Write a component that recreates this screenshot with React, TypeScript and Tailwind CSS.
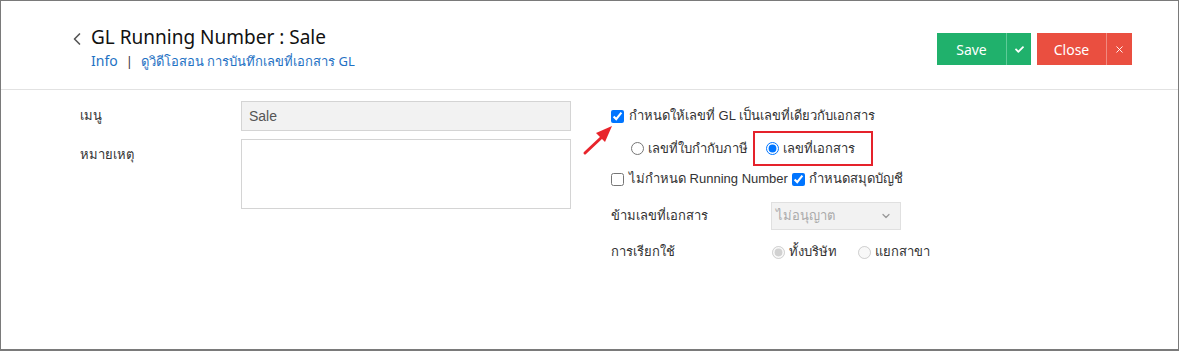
import { ChevronLeft, ChevronDown, X } from "lucide-react";
import { FaCheck } from "react-icons/fa";

const font = { fontFamily: '"Noto Sans", "Open Sans", sans-serif' };
const bodyFont = { fontFamily: '"Liberation Sans", "Noto Sans", sans-serif' };

function Check({ checked }: { checked?: boolean }) {
  return (
    <input
      type="checkbox"
      defaultChecked={checked}
      className="h-[13px] w-[13px] shrink-0 accent-[#0075ff]"
    />
  );
}

function Radio({ checked, disabled, name }: { checked?: boolean; disabled?: boolean; name: string }) {
  return (
    <input
      type="radio"
      name={name}
      defaultChecked={checked}
      disabled={disabled}
      className="h-[13px] w-[13px] shrink-0 accent-[#0075ff]"
    />
  );
}

export default function App() {
  return (
    <div
      className="relative h-[351px] w-[1179px] overflow-hidden border border-b-2 border-[#7a7a7a] bg-white text-[#333]"
      style={font}
    >
      {/* Header */}
      <div className="flex h-[89px] items-start justify-between border-b border-[#e2e2e2] pl-[66px] pr-[46px]">
        <div className="flex items-start pt-[23px]">
          <ChevronLeft className="mt-[5px] h-[20px] w-[20px] text-[#555]" strokeWidth={2} />
          <div className="ml-[4px]">
            <div className="text-[19px] leading-[26px] text-[#111]">GL Running Number : Sale</div>
            <div className="mt-[2px] flex items-center text-[13px] leading-[18px] text-[#1f72c4]">
              <span className="text-[14px]">Info</span>
              <span className="mx-[8px] text-[#333]">|</span>
              <span>ดูวิดีโอสอน การบันทึกเลขที่เอกสาร GL</span>
            </div>
          </div>
        </div>

        <div className="flex gap-[6px] pt-[32px]">
          <div className="flex h-[32px] bg-[#20b16c] text-white">
            <button className="w-[69px] text-[14px]">Save</button>
            <div className="w-px bg-[#5fcb98]" />
            <button className="flex w-[24px] items-center justify-center">
              <FaCheck className="h-[9px] w-[9px]" />
            </button>
          </div>
          <div className="flex h-[32px] bg-[#ea4f40] text-white">
            <button className="w-[69px] text-[14px]">Close</button>
            <div className="w-px bg-[#f08a80]" />
            <button className="flex w-[25px] items-center justify-center">
              <X className="h-[11px] w-[11px]" strokeWidth={2} />
            </button>
          </div>
        </div>
      </div>

      {/* Body */}
      <div className="flex pl-[79px] pt-[11px] text-[13px]" style={bodyFont}>
        <div className="w-[491px]">
          <div className="flex h-[30px] items-center">
            <div className="w-[161px]">เมนู</div>
            <div className="flex h-[30px] w-[330px] items-center border border-[#d4d4d4] bg-[#f2f2f2] px-[7px] text-[14px] text-[#555]">
              Sale
            </div>
          </div>
          <div className="mt-[8px] flex items-start">
            <div className="w-[161px] pt-[6px]">หมายเหตุ</div>
            <div className="h-[70px] w-[330px] border border-[#d4d4d4] bg-white" />
          </div>
        </div>

        <div className="ml-[40px] pt-[3px]">
          <label className="flex h-[24px] items-center gap-[5px]">
            <Check checked />
            <span>กำหนดให้เลขที่ GL เป็นเลขที่เดียวกับเอกสาร</span>
          </label>

          <div className="mt-[3px] flex h-[35px] items-center pl-[20px]">
            <label className="flex w-[122px] items-center gap-[4px] whitespace-nowrap">
              <Radio name="doc" />
              <span>เลขที่ใบกำกับภาษี</span>
            </label>
            <div className="flex h-[35px] w-[120px] items-center border-2 border-[#e5222b] pl-[11px]">
              <label className="flex items-center gap-[4px]">
                <Radio name="doc" checked />
                <span>เลขที่เอกสาร</span>
              </label>
            </div>
          </div>

          <div className="mt-[1px] flex h-[24px] items-center">
            <label className="flex w-[181px] items-center gap-[5px] whitespace-nowrap">
              <Check />
              <span>ไม่กำหนด Running Number</span>
            </label>
            <label className="flex items-center gap-[4px]">
              <Check checked />
              <span>กำหนดสมุดบัญชี</span>
            </label>
          </div>

          <div className="mt-[11px] flex h-[28px] items-center">
            <div className="w-[160px]">ข้ามเลขที่เอกสาร</div>
            <div className="flex h-[28px] w-[130px] items-center justify-between border border-[#e0e0e0] bg-[#f2f2f2] pl-[4px] pr-[8px] text-[#aaa]">
              <span>ไม่อนุญาต</span>
              <ChevronDown className="h-[12px] w-[12px] text-[#999]" strokeWidth={2.5} />
            </div>
          </div>

          <div className="mt-[10px] flex h-[24px] items-center">
            <div className="w-[161px]">การเรียกใช้</div>
            <label className="flex w-[86px] items-center gap-[4px] whitespace-nowrap">
              <Radio name="use" checked disabled />
              <span>ทั้งบริษัท</span>
            </label>
            <label className="flex items-center gap-[4px]">
              <Radio name="use" disabled />
              <span>แยกสาขา</span>
            </label>
          </div>
        </div>
      </div>

      {/* Red annotation arrow */}
      <svg
        className="absolute left-[580px] top-[122px]"
        width="34"
        height="34"
        viewBox="0 0 34 34"
      >
        <line x1="4" y1="30" x2="21" y2="14" stroke="#e8242b" strokeWidth="3" strokeLinecap="round" />
        <polygon points="31,3 15,10 24,19" fill="#e8242b" />
      </svg>
    </div>
  );
}
